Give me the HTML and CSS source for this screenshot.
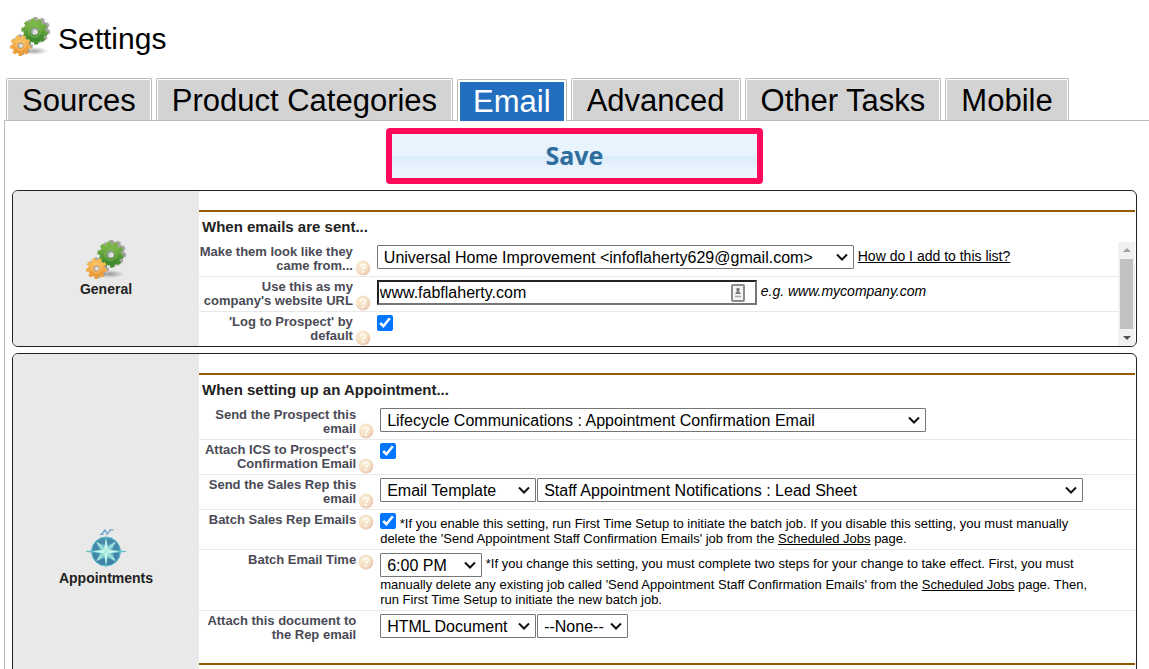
FILE: index.html
```
<!DOCTYPE html>
<html lang="en">
<head>
    <meta charset="UTF-8">
    <meta name="viewport" content="width=device-width, initial-scale=1.0">
    <title>Settings</title>
    <link rel="stylesheet" href="styles.css">
</head>
<body>
    <!-- Shared icons -->
    <svg class="sprite" aria-hidden="true">
        <defs>
            <linearGradient id="green" x1="0" y1="0" x2="0" y2="1">
                <stop offset="0" stop-color="#7db648" />
                <stop offset="1" stop-color="#3f8a2c" />
            </linearGradient>
            <linearGradient id="orange" x1="0" y1="0" x2="0" y2="1">
                <stop offset="0" stop-color="#f9bd5c" />
                <stop offset="1" stop-color="#ec9a35" />
            </linearGradient>
            <radialGradient id="shade">
                <stop offset="0" stop-color="#000" stop-opacity="0.35" />
                <stop offset="1" stop-color="#000" stop-opacity="0" />
            </radialGradient>
            <linearGradient id="sea" x1="0" y1="0" x2="0" y2="1">
                <stop offset="0" stop-color="#4b8fae" />
                <stop offset="1" stop-color="#3f7fa8" />
            </linearGradient>
            <radialGradient id="peach" cx="0.35" cy="0.3" r="0.8">
                <stop offset="0" stop-color="#f9ecd4" />
                <stop offset="0.6" stop-color="#f4dfc4" />
                <stop offset="1" stop-color="#e6bfae" />
            </radialGradient>
        </defs>
        <symbol id="icon-gears" viewBox="0 0 40 40">
            <ellipse cx="24" cy="34" rx="14" ry="4" fill="url(#shade)" />
            <g fill="none" stroke="#a5a5a5">
                <circle cx="27" cy="13" r="8" stroke-width="7" />
                <circle cx="27" cy="13" r="11.5" stroke-width="3.5" pathLength="20" stroke-dasharray="1.1 0.9" />
                <circle cx="12.500" cy="27.500" r="6" stroke-width="5" />
                <circle cx="12.500" cy="27.500" r="9" stroke-width="3" pathLength="18" stroke-dasharray="1.1 0.9" />
            </g>
            <g fill="none" stroke="url(#green)">
                <circle cx="24.500" cy="14.500" r="7" stroke-width="8" />
                <circle cx="24.500" cy="14.500" r="11.500" stroke-width="3.500" pathLength="20" stroke-dasharray="1.1 0.9" />
            </g>
            <circle cx="24.500" cy="14.500" r="5.800" fill="none" stroke="#8fc268" stroke-width="1" opacity="0.7" />
            <circle cx="24.500" cy="14.500" r="3.800" fill="#9aa39a" />
            <circle cx="25.200" cy="15" r="2.500" fill="#e0e0e0" />
            <g fill="none" stroke="url(#orange)">
                <circle cx="10.500" cy="28.500" r="5.500" stroke-width="6" />
                <circle cx="10.500" cy="28.500" r="9" stroke-width="3" pathLength="18" stroke-dasharray="1.1 0.9" />
            </g>
            <circle cx="10.500" cy="28.500" r="4.600" fill="none" stroke="#fbd08a" stroke-width="1" opacity="0.6" />
            <circle cx="10.500" cy="28.500" r="3" fill="#b3a591" />
            <circle cx="11" cy="28.800" r="2" fill="#e0e0e0" />
        </symbol>
        <symbol id="icon-compass" viewBox="0 0 40 40">
            <path d="M15.500 5.500 L19 0.800 L21 5 L25 0.800 M14 5.300 h3.500 M23.500 0.800 h4" fill="none" stroke="#6fa9cd" stroke-width="1.300" />
            <circle cx="20" cy="22.500" r="14.500" fill="url(#sea)" stroke="#62c3cc" stroke-width="1" />
            <path d="M20 17 L10.500 13 L14.500 22 L10.500 32 L20 28 L29.500 32 L25.500 22 L29.500 13 Z" fill="#77c4cc" />
            <path d="M20 7 L21.800 20.500 L40 22 L40 23 L21.800 24.500 L20 40 L18.200 24.500 L0 23 L0 22 L18.200 20.500 Z" fill="#63bfc9" />
            <path d="M20 9 L22 20.500 L33 22.500 L22 24.500 L20 36 L18 24.500 L7 22.500 L18 20.500 Z" fill="#c5f5e6" />
            <path d="M11 13.500 L20 22.500 L29 13.500 M11 31.500 L20 22.500 L29 31.500" fill="none" stroke="#a9e8e0" stroke-width="1.500" />
        </symbol>
        <symbol id="icon-help" viewBox="0 0 16 16">
            <circle cx="8" cy="8" r="7.400" fill="url(#peach)" />
            <path d="M5.700 6.300 C5.700 3.500 10.500 3.600 10.400 6.200 C10.300 7.800 8.200 7.700 8.100 9.600" fill="none" stroke="#fffdf8" stroke-width="1.700" />
            <circle cx="8.100" cy="11.900" r="1.100" fill="#fffdf8" />
        </symbol>
    </svg>

    <header class="page-header">
        <svg class="icon"><use href="#icon-gears" /></svg>
        <h1>Settings</h1>
    </header>

    <nav>
        <ul class="tabs">
            <li><a href="#">Sources</a></li>
            <li><a href="#">Product Categories</a></li>
            <li class="active"><a href="#">Email</a></li>
            <li><a href="#">Advanced</a></li>
            <li><a href="#">Other Tasks</a></li>
            <li><a href="#">Mobile</a></li>
        </ul>
    </nav>

    <main class="panel">
        <button class="save" type="button">Save</button>

        <section class="card">
            <div class="side">
                <svg class="icon"><use href="#icon-gears" /></svg>
                General
            </div>
            <div class="content">
                <h2>When emails are sent...</h2>
                <div class="scroll-area">
                    <div class="rows">
                        <div class="row">
                            <div class="name">
                                <label for="fromAddress">Make them look like they came from...</label>
                                <svg class="help"><use href="#icon-help" /></svg>
                            </div>
                            <div class="field">
                                <select id="fromAddress" class="w-from"><option>Universal Home Improvement &lt;infoflaherty629@gmail.com&gt;</option></select>
                                <a href="#">How do I add to this list?</a>
                            </div>
                        </div>
                        <div class="row">
                            <div class="name">
                                <label for="websiteUrl">Use this as my company's website URL</label>
                                <svg class="help"><use href="#icon-help" /></svg>
                            </div>
                            <div class="field">
                                <span class="text-box">
                                    <input type="text" id="websiteUrl" value="www.fabflaherty.com">
                                    <svg class="autofill" viewBox="0 0 14 18">
                                        <rect x="1" y="1" width="12" height="16" rx="1" fill="#f4f4f4" stroke="#8c8c8c" stroke-width="2" />
                                        <circle cx="7" cy="5.500" r="1.700" fill="#777" />
                                        <path d="M4 10 L7 6 L10 10 Z" fill="#777" />
                                        <path d="M4 12.500 h6" stroke="#aaa" stroke-width="1.500" />
                                    </svg>
                                </span>
                                <em>e.g. www.mycompany.com</em>
                            </div>
                        </div>
                        <div class="row">
                            <div class="name">
                                <label for="logToProspect">'Log to Prospect' by default</label>
                                <svg class="help"><use href="#icon-help" /></svg>
                            </div>
                            <div class="field">
                                <input type="checkbox" id="logToProspect" checked>
                            </div>
                        </div>
                    </div>
                    <div class="scrollbar">
                        <span class="arrow up"></span>
                        <span class="thumb"></span>
                        <span class="arrow down"></span>
                    </div>
                </div>
            </div>
        </section>

        <section class="card">
            <div class="side">
                <svg class="icon"><use href="#icon-compass" /></svg>
                Appointments
            </div>
            <div class="content">
                <h2>When setting up an Appointment...</h2>
                <div class="rows">
                    <div class="row">
                        <div class="name">
                            <label for="prospectEmail">Send the Prospect this email</label>
                            <svg class="help"><use href="#icon-help" /></svg>
                        </div>
                        <div class="field">
                            <select id="prospectEmail" class="w-template"><option>Lifecycle Communications : Appointment Confirmation Email</option></select>
                        </div>
                    </div>
                    <div class="row">
                        <div class="name">
                            <label for="attachIcs">Attach ICS to Prospect's Confirmation Email</label>
                            <svg class="help"><use href="#icon-help" /></svg>
                        </div>
                        <div class="field">
                            <input type="checkbox" id="attachIcs" checked>
                        </div>
                    </div>
                    <div class="row">
                        <div class="name">
                            <label for="repEmailType">Send the Sales Rep this email</label>
                            <svg class="help"><use href="#icon-help" /></svg>
                        </div>
                        <div class="field">
                            <div class="pair">
                                <select id="repEmailType" class="w-type"><option>Email Template</option></select>
                                <select class="w-template" aria-label="Sales Rep template"><option>Staff Appointment Notifications : Lead Sheet</option></select>
                            </div>
                        </div>
                    </div>
                    <div class="row">
                        <div class="name">
                            <label for="batchEmails">Batch Sales Rep Emails</label>
                            <svg class="help"><use href="#icon-help" /></svg>
                        </div>
                        <div class="field note">
                            <input type="checkbox" id="batchEmails" checked>
                            *If you enable this setting, run First Time Setup to initiate the batch job. If you disable this setting, you must manually<br>
                            delete the 'Send Appointment Staff Confirmation Emails' job from the <a href="#">Scheduled Jobs</a> page.
                        </div>
                    </div>
                    <div class="row">
                        <div class="name">
                            <label for="batchTime">Batch Email Time</label>
                            <svg class="help"><use href="#icon-help" /></svg>
                        </div>
                        <div class="field note">
                            <select id="batchTime" class="w-time"><option>6:00 PM</option></select>
                            *If you change this setting, you must complete two steps for your change to take effect. First, you must<br>
                            manually delete any existing job called 'Send Appointment Staff Confirmation Emails' from the <a href="#">Scheduled Jobs</a> page. Then,<br>
                            run First Time Setup to initiate the new batch job.
                        </div>
                    </div>
                    <div class="row">
                        <div class="name no-help">
                            <label for="documentType">Attach this document to the Rep email</label>
                        </div>
                        <div class="field">
                            <div class="pair">
                                <select id="documentType" class="w-type"><option>HTML Document</option></select>
                                <select class="w-none" aria-label="Document"><option>--None--</option></select>
                            </div>
                        </div>
                    </div>
                </div>
                <div class="next-group"></div>
            </div>
        </section>
    </main>
</body>
</html>
```

FILE: styles.css
```
* {
    box-sizing: border-box;
}

body {
    margin: 0;
    height: 100vh;
    overflow: hidden;
    font-family: Arial, "Liberation Sans", sans-serif;
    font-size: 14px;
    line-height: 15px;
    color: #000;
    background-color: #fff;
}

a {
    color: #000;
}

.sprite {
    position: absolute;
    width: 0;
    height: 0;
}

.icon {
    display: block;
    width: 40px;
    height: 40px;
}

.page-header {
    display: flex;
    align-items: center;
    gap: 8px;
    padding: 17px 10px 21px;
}

.page-header h1 {
    margin: 0;
    padding-top: 4px;
    font-size: 30px;
    font-weight: normal;
    line-height: 36px;
}

/* Tabs */
.tabs {
    display: flex;
    align-items: flex-end;
    gap: 4px;
    margin: 0;
    padding: 0 6px;
    list-style: none;
}

.tabs li {
    padding: 1px 1px 0;
    border: 1px solid #bbb;
    border-bottom: none;
    border-radius: 2px 2px 0 0;
}

.tabs a {
    display: block;
    padding: 2px 14px 0;
    font-size: 31px;
    line-height: 38px;
    white-space: nowrap;
    text-decoration: none;
    background-color: #d3d3d3;
}

.tabs .active {
    position: relative;
    margin-bottom: -1px;
    padding: 2px 2px 0;
    background-color: #fff;
}

.tabs .active a {
    padding: 1px 13px 0;
    color: #fff;
    background-color: #236fbf;
}

.panel {
    margin-left: 4px;
    padding: 7px 12px 0 7px;
    border-top: 1px solid #bbb;
    border-left: 1px solid #bbb;
}

.save {
    display: block;
    width: 377px;
    height: 56px;
    margin: 0 auto 6px;
    padding: 0 0 3px;
    border: 6px solid #ff0a5a;
    border-radius: 4px;
    font-family: "Noto Sans", sans-serif;
    font-size: 25px;
    font-weight: bold;
    line-height: 40px;
    color: #2e6e9e;
    background: linear-gradient(#e8f3fd 0%, #e8f3fd 48%, #dcecfa 52%, #ebf4fd 85%, #ebf4fd 100%);
    cursor: pointer;
}

/* Settings groups */
.card {
    display: flex;
    margin-bottom: 6px;
    border: 1px solid #222;
    border-radius: 6px;
    overflow: hidden;
}

.side {
    display: flex;
    flex: none;
    flex-direction: column;
    align-items: center;
    justify-content: center;
    gap: 2px;
    width: 186px;
    font-weight: bold;
    color: #222;
    background-color: #e9e9e9;
}

.content {
    flex: 1;
    min-width: 0;
    padding: 19px 1px 0 0;
}

.content h2 {
    margin: 0;
    padding: 0 3px;
    border-top: 2px solid #965a00;
    font-size: 15px;
    line-height: 30px;
    color: #222;
}

.next-group {
    height: 98px;
    margin-top: 18px;
    border-top: 2px solid #965a00;
}

.scroll-area {
    display: flex;
}

.rows {
    flex: 1;
}

.row {
    display: grid;
    grid-template-columns: minmax(0, 6fr) minmax(0, 25fr);
    border-bottom: 1px solid #e9e9e9;
}

.row:last-child {
    border-bottom: none;
}

.name {
    display: flex;
    align-items: flex-start;
    align-self: start;
    gap: 2px;
    padding: 3px 6px 3px 0;
}

.name label {
    flex: 1;
    font-size: 13px;
    font-weight: bold;
    line-height: 14px;
    text-align: right;
    color: #4a4a55;
}

.name.no-help {
    padding-right: 24px;
}

.help {
    flex: none;
    align-self: flex-end;
    width: 16px;
    height: 16px;
    margin-bottom: -3px;
}

.field {
    padding: 3px 0;
    white-space: nowrap;
}

.note {
    font-size: 13px;
}

.pair {
    display: flex;
    gap: 1px;
}

select {
    height: 24px;
    padding: 0 20px 0 6px;
    border: 1px solid #767676;
    border-radius: 1px;
    appearance: none;
    font-family: inherit;
    font-size: 16px;
    color: #000;
    background: #fff url("data:image/svg+xml,%3Csvg xmlns='http://www.w3.org/2000/svg' width='12' height='8'%3E%3Cpath d='M1 1.5 L6 6.500 L11 1.500' fill='none' stroke='%23111' stroke-width='2'/%3E%3C/svg%3E") no-repeat right 5px center;
    vertical-align: middle;
}

.w-from {
    width: 477px;
}

.w-template {
    width: 546px;
}

.w-type {
    width: 156px;
}

.w-time {
    width: 102px;
}

.w-none {
    width: 91px;
}

.text-box {
    display: inline-block;
    position: relative;
    vertical-align: middle;
}

.text-box input {
    display: block;
    width: 380px;
    height: 25px;
    padding: 0 1px;
    border: 2px solid;
    border-color: #222 #767676 #767676 #222;
    font-family: inherit;
    font-size: 16px;
}

.autofill {
    position: absolute;
    top: 4px;
    right: 12px;
    width: 14px;
    height: 18px;
}

input[type="checkbox"] {
    width: 16px;
    height: 16px;
    margin: 0;
    accent-color: #0075ff;
    vertical-align: -1px;
}

/* Scrollbar beside the General list */
.scrollbar {
    display: flex;
    flex-direction: column;
    align-items: center;
    width: 17px;
    padding: 6px 0;
    background-color: #f1f1f1;
}

.arrow {
    border: 4px solid transparent;
}

.up {
    border-top: none;
    border-bottom-color: #a3a3a3;
}

.down {
    border-bottom: none;
    border-top-color: #505050;
}

.thumb {
    flex: 1;
    width: 13px;
    margin: 7px 0;
    background-color: #c1c1c1;
}
```
